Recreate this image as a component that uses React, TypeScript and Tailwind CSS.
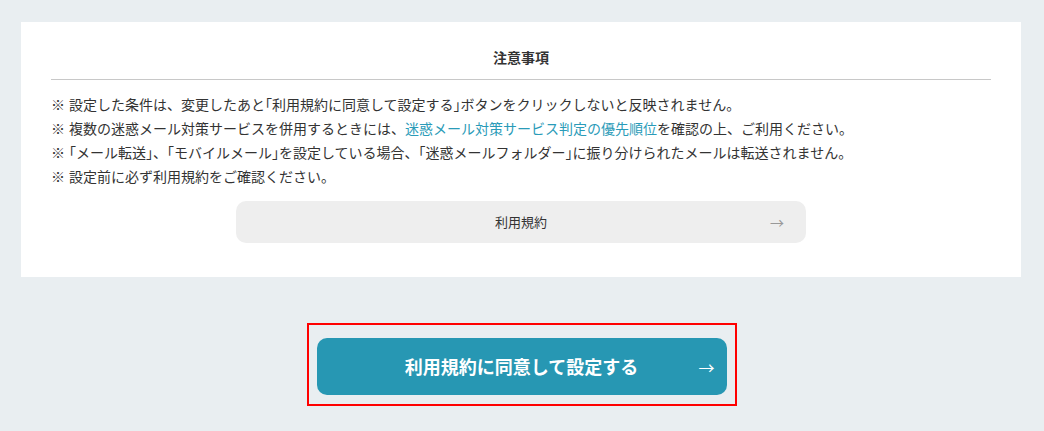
import React from 'react';

// trim the full-width brackets like the reference does
const B = ({ c }: { c: string }) => <span className="[font-feature-settings:'halt']">{c}</span>;

const notes: React.ReactNode[] = [
  <>
    設定した条件は、変更したあと<B c="「" />利用規約に同意して設定する<B c="」" />ボタンをクリックしないと反映されません。
  </>,
  <>
    複数の迷惑メール対策サービスを併用するときには、
    <a href="#" className="text-[#2a9bb8]">迷惑メール対策サービス判定の優先順位</a>
    を確認の上、ご利用ください。
  </>,
  <>
    <B c="「" />メール転送<B c="」" />、<B c="「" />モバイルメール<B c="」" />を設定している場合、<B c="「" />迷惑メールフォルダー<B c="」" />に振り分けられたメールは転送されません。
  </>,
  '設定前に必ず利用規約をご確認ください。',
];

export default function App() {
  return (
    <div
      className="min-h-[431px] bg-[#e9eef1] pt-[22px] text-[#333]"
      style={{ fontFamily: '"Noto Sans CJK JP", "Noto Sans", sans-serif' }}
    >
      <div className="mx-[21px] w-[1000px] bg-white px-[30px] pt-[25px] pb-[34px]">
        <h2 className="text-center text-[14px] font-bold leading-[20px]">注意事項</h2>
        <div className="mt-[12px] border-t border-[#c8c8c8]" />
        <ul className="mt-[12px] text-[14px] leading-[24px]">
          {notes.map((n, i) => (
            <li key={i} className="flex">
              <span className="mr-[4px]">※</span>
              <span>{n}</span>
            </li>
          ))}
        </ul>
        <div className="mt-[13px] flex justify-center">
          <button className="relative flex h-[42px] w-[570px] items-center justify-center rounded-[10px] bg-[#eeeeee] text-[13px]">
            利用規約
            <span className="absolute right-[22px] text-[14px] text-[#999]">→</span>
          </button>
        </div>
      </div>

      <div className="mt-[46px] flex justify-center">
        <div className="ml-[-1px] border-2 border-[#ff0000] px-[8px] pt-[13px] pb-[9px]">
          <button className="relative flex h-[57px] w-[410px] items-center justify-center rounded-[10px] bg-[#2797b3] text-[18px] font-bold text-white">
            利用規約に同意して設定する
            <span className="absolute right-[12px] text-[16px] font-normal">→</span>
          </button>
        </div>
      </div>
    </div>
  );
}
